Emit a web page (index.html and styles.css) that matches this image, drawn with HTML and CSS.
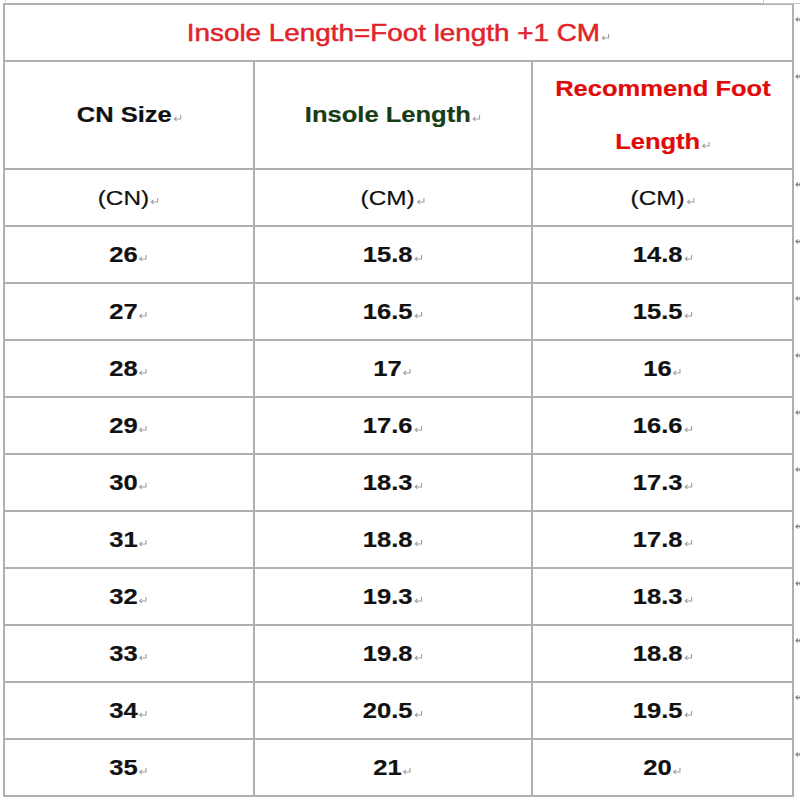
FILE: index.html
```html
<!DOCTYPE html>
<html>
<head>
<meta charset="utf-8">
<link rel="stylesheet" href="styles.css">
</head>
<body>
<div class="page">
  <span class="corner-tl"></span>
  <span class="corner-tr"></span>
  <table class="size-table">
    <colgroup>
      <col class="c1"><col class="c2"><col class="c3"><col class="c4">
    </colgroup>
    <tr class="row">
      <td colspan="3" class="title"><span class="t">Insole Length=Foot length +1 CM<svg class="ret" viewBox="0 0 10 9"><path d="M8.5 1v4.5H2.5M4.5 3.2 2.3 5.5 4.5 7.8"/></svg></span></td>
      <td class="mark"><svg viewBox="0 0 7 7"><path d="M0.5 3.5h6M3 1.5 1 3.5 3 5.5M5 1.8v3.4"/></svg></td>
    </tr>
    <tr class="row head-row">
      <td class="bold"><span class="t">CN Size<svg class="ret" viewBox="0 0 10 9"><path d="M8.5 1v4.5H2.5M4.5 3.2 2.3 5.5 4.5 7.8"/></svg></span></td>
      <td class="bold green"><span class="t">Insole Length<svg class="ret" viewBox="0 0 10 9"><path d="M8.5 1v4.5H2.5M4.5 3.2 2.3 5.5 4.5 7.8"/></svg></span></td>
      <td class="bold red two"><span class="t">Recommend Foot<br>Length<svg class="ret" viewBox="0 0 10 9"><path d="M8.5 1v4.5H2.5M4.5 3.2 2.3 5.5 4.5 7.8"/></svg></span></td>
      <td class="mark"><svg viewBox="0 0 7 7"><path d="M0.5 3.5h6M3 1.5 1 3.5 3 5.5M5 1.8v3.4"/></svg></td>
    </tr>
    <tr class="row">
      <td><span class="t">(CN)<svg class="ret" viewBox="0 0 10 9"><path d="M8.5 1v4.5H2.5M4.5 3.2 2.3 5.5 4.5 7.8"/></svg></span></td>
      <td><span class="t">(CM)<svg class="ret" viewBox="0 0 10 9"><path d="M8.5 1v4.5H2.5M4.5 3.2 2.3 5.5 4.5 7.8"/></svg></span></td>
      <td><span class="t">(CM)<svg class="ret" viewBox="0 0 10 9"><path d="M8.5 1v4.5H2.5M4.5 3.2 2.3 5.5 4.5 7.8"/></svg></span></td>
      <td class="mark"><svg viewBox="0 0 7 7"><path d="M0.5 3.5h6M3 1.5 1 3.5 3 5.5M5 1.8v3.4"/></svg></td>
    </tr>
    <tr class="row data">
      <td><span class="t">26<svg class="ret" viewBox="0 0 10 9"><path d="M8.5 1v4.5H2.5M4.5 3.2 2.3 5.5 4.5 7.8"/></svg></span></td>
      <td><span class="t">15.8<svg class="ret" viewBox="0 0 10 9"><path d="M8.5 1v4.5H2.5M4.5 3.2 2.3 5.5 4.5 7.8"/></svg></span></td>
      <td><span class="t">14.8<svg class="ret" viewBox="0 0 10 9"><path d="M8.5 1v4.5H2.5M4.5 3.2 2.3 5.5 4.5 7.8"/></svg></span></td>
      <td class="mark"><svg viewBox="0 0 7 7"><path d="M0.5 3.5h6M3 1.5 1 3.5 3 5.5M5 1.8v3.4"/></svg></td>
    </tr>
    <tr class="row data">
      <td><span class="t">27<svg class="ret" viewBox="0 0 10 9"><path d="M8.5 1v4.5H2.5M4.5 3.2 2.3 5.5 4.5 7.8"/></svg></span></td>
      <td><span class="t">16.5<svg class="ret" viewBox="0 0 10 9"><path d="M8.5 1v4.5H2.5M4.5 3.2 2.3 5.5 4.5 7.8"/></svg></span></td>
      <td><span class="t">15.5<svg class="ret" viewBox="0 0 10 9"><path d="M8.5 1v4.5H2.5M4.5 3.2 2.3 5.5 4.5 7.8"/></svg></span></td>
      <td class="mark"><svg viewBox="0 0 7 7"><path d="M0.5 3.5h6M3 1.5 1 3.5 3 5.5M5 1.8v3.4"/></svg></td>
    </tr>
    <tr class="row data">
      <td><span class="t">28<svg class="ret" viewBox="0 0 10 9"><path d="M8.5 1v4.5H2.5M4.5 3.2 2.3 5.5 4.5 7.8"/></svg></span></td>
      <td><span class="t">17<svg class="ret" viewBox="0 0 10 9"><path d="M8.5 1v4.5H2.5M4.5 3.2 2.3 5.5 4.5 7.8"/></svg></span></td>
      <td><span class="t">16<svg class="ret" viewBox="0 0 10 9"><path d="M8.5 1v4.5H2.5M4.5 3.2 2.3 5.5 4.5 7.8"/></svg></span></td>
      <td class="mark"><svg viewBox="0 0 7 7"><path d="M0.5 3.5h6M3 1.5 1 3.5 3 5.5M5 1.8v3.4"/></svg></td>
    </tr>
    <tr class="row data">
      <td><span class="t">29<svg class="ret" viewBox="0 0 10 9"><path d="M8.5 1v4.5H2.5M4.5 3.2 2.3 5.5 4.5 7.8"/></svg></span></td>
      <td><span class="t">17.6<svg class="ret" viewBox="0 0 10 9"><path d="M8.5 1v4.5H2.5M4.5 3.2 2.3 5.5 4.5 7.8"/></svg></span></td>
      <td><span class="t">16.6<svg class="ret" viewBox="0 0 10 9"><path d="M8.5 1v4.5H2.5M4.5 3.2 2.3 5.5 4.5 7.8"/></svg></span></td>
      <td class="mark"><svg viewBox="0 0 7 7"><path d="M0.5 3.5h6M3 1.5 1 3.5 3 5.5M5 1.8v3.4"/></svg></td>
    </tr>
    <tr class="row data">
      <td><span class="t">30<svg class="ret" viewBox="0 0 10 9"><path d="M8.5 1v4.5H2.5M4.5 3.2 2.3 5.5 4.5 7.8"/></svg></span></td>
      <td><span class="t">18.3<svg class="ret" viewBox="0 0 10 9"><path d="M8.5 1v4.5H2.5M4.5 3.2 2.3 5.5 4.5 7.8"/></svg></span></td>
      <td><span class="t">17.3<svg class="ret" viewBox="0 0 10 9"><path d="M8.5 1v4.5H2.5M4.5 3.2 2.3 5.5 4.5 7.8"/></svg></span></td>
      <td class="mark"><svg viewBox="0 0 7 7"><path d="M0.5 3.5h6M3 1.5 1 3.5 3 5.5M5 1.8v3.4"/></svg></td>
    </tr>
    <tr class="row data">
      <td><span class="t">31<svg class="ret" viewBox="0 0 10 9"><path d="M8.5 1v4.5H2.5M4.5 3.2 2.3 5.5 4.5 7.8"/></svg></span></td>
      <td><span class="t">18.8<svg class="ret" viewBox="0 0 10 9"><path d="M8.5 1v4.5H2.5M4.5 3.2 2.3 5.5 4.5 7.8"/></svg></span></td>
      <td><span class="t">17.8<svg class="ret" viewBox="0 0 10 9"><path d="M8.5 1v4.5H2.5M4.5 3.2 2.3 5.5 4.5 7.8"/></svg></span></td>
      <td class="mark"><svg viewBox="0 0 7 7"><path d="M0.5 3.5h6M3 1.5 1 3.5 3 5.5M5 1.8v3.4"/></svg></td>
    </tr>
    <tr class="row data">
      <td><span class="t">32<svg class="ret" viewBox="0 0 10 9"><path d="M8.5 1v4.5H2.5M4.5 3.2 2.3 5.5 4.5 7.8"/></svg></span></td>
      <td><span class="t">19.3<svg class="ret" viewBox="0 0 10 9"><path d="M8.5 1v4.5H2.5M4.5 3.2 2.3 5.5 4.5 7.8"/></svg></span></td>
      <td><span class="t">18.3<svg class="ret" viewBox="0 0 10 9"><path d="M8.5 1v4.5H2.5M4.5 3.2 2.3 5.5 4.5 7.8"/></svg></span></td>
      <td class="mark"><svg viewBox="0 0 7 7"><path d="M0.5 3.5h6M3 1.5 1 3.5 3 5.5M5 1.8v3.4"/></svg></td>
    </tr>
    <tr class="row data">
      <td><span class="t">33<svg class="ret" viewBox="0 0 10 9"><path d="M8.5 1v4.5H2.5M4.5 3.2 2.3 5.5 4.5 7.8"/></svg></span></td>
      <td><span class="t">19.8<svg class="ret" viewBox="0 0 10 9"><path d="M8.5 1v4.5H2.5M4.5 3.2 2.3 5.5 4.5 7.8"/></svg></span></td>
      <td><span class="t">18.8<svg class="ret" viewBox="0 0 10 9"><path d="M8.5 1v4.5H2.5M4.5 3.2 2.3 5.5 4.5 7.8"/></svg></span></td>
      <td class="mark"><svg viewBox="0 0 7 7"><path d="M0.5 3.5h6M3 1.5 1 3.5 3 5.5M5 1.8v3.4"/></svg></td>
    </tr>
    <tr class="row data">
      <td><span class="t">34<svg class="ret" viewBox="0 0 10 9"><path d="M8.5 1v4.5H2.5M4.5 3.2 2.3 5.5 4.5 7.8"/></svg></span></td>
      <td><span class="t">20.5<svg class="ret" viewBox="0 0 10 9"><path d="M8.5 1v4.5H2.5M4.5 3.2 2.3 5.5 4.5 7.8"/></svg></span></td>
      <td><span class="t">19.5<svg class="ret" viewBox="0 0 10 9"><path d="M8.5 1v4.5H2.5M4.5 3.2 2.3 5.5 4.5 7.8"/></svg></span></td>
      <td class="mark"><svg viewBox="0 0 7 7"><path d="M0.5 3.5h6M3 1.5 1 3.5 3 5.5M5 1.8v3.4"/></svg></td>
    </tr>
    <tr class="row data">
      <td><span class="t">35<svg class="ret" viewBox="0 0 10 9"><path d="M8.5 1v4.5H2.5M4.5 3.2 2.3 5.5 4.5 7.8"/></svg></span></td>
      <td><span class="t">21<svg class="ret" viewBox="0 0 10 9"><path d="M8.5 1v4.5H2.5M4.5 3.2 2.3 5.5 4.5 7.8"/></svg></span></td>
      <td><span class="t">20<svg class="ret" viewBox="0 0 10 9"><path d="M8.5 1v4.5H2.5M4.5 3.2 2.3 5.5 4.5 7.8"/></svg></span></td>
      <td class="mark"><svg viewBox="0 0 7 7"><path d="M0.5 3.5h6M3 1.5 1 3.5 3 5.5M5 1.8v3.4"/></svg></td>
    </tr>
  </table>
</div>
</body>
</html>
```
FILE: styles.css
```css
html, body { margin: 0; padding: 0; background: #fff; }
.page { position: relative; width: 800px; height: 800px; padding: 3px 0 0 3px; box-sizing: border-box; overflow: hidden; }
.size-table { border-collapse: collapse; table-layout: fixed; width: 796px; font-family: "Liberation Sans", Arial, sans-serif; color: #111; }
.c1 { width: 250px; } .c2 { width: 278px; } .c3 { width: 261px; } .c4 { width: 7px; }
td { border: 2px solid #b0b0b0; text-align: center; vertical-align: middle; padding: 0; font-size: 21px; }
td.mark { border: none; vertical-align: top; text-align: left; padding: 12px 0 0 1px; }
td.mark svg { width: 7px; height: 7px; display: block; fill: none; stroke: #888; stroke-width: 1.2; }
.row { height: 57px; }
.head-row { height: 108px; }
.t { display: inline-block; transform: scaleX(1.16); white-space: nowrap; -webkit-text-stroke: 0.2px currentColor; }
.title { font-size: 24px; color: #e2232b; }
.title .t { -webkit-text-stroke: 0.5px currentColor; }
.bold { font-weight: bold; font-size: 22px; }
.green { color: #173d14; }
.red { color: #e00a0a; }
.two .t { line-height: 53px; }
.data td { font-weight: bold; font-size: 22px; }
.ret { width: 9px; height: 8px; fill: none; stroke: #a0a0a0; stroke-width: 1.1; vertical-align: baseline; }
.corner-tl { position: absolute; left: 0; top: 0; width: 5px; height: 4px; border-right: 1px solid #ccc; }
.corner-tr { position: absolute; left: 763px; top: 0; width: 37px; height: 3px; border-left: 1px solid #c8c8c8; border-bottom: 1px solid #c8c8c8; }
```
